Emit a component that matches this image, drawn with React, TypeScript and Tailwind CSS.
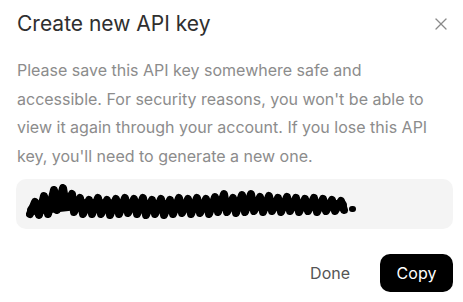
import { X } from "lucide-react";

const scribble =
  "M4 30 L9 18 L13 31 L18 12 L22 30 L28 6 L31 26 L37 4 L40 22 L46 10 L48 28 L54 14 L57 30 L63 16 L66 30 L72 14 L75 30 L81 16 L84 31 L90 15 L93 30 L99 14 L102 29 L108 15 L111 30 L117 14 L120 31 L126 16 L129 30 L135 15 L138 31 L144 16 L147 30 L153 14 L156 29 L162 15 L165 30 L171 14 L174 29 L180 15 L183 30 L189 13 L192 28 L198 10 L201 28 L207 14 L210 29 L216 11 L219 28 L225 10 L228 27 L234 13 L237 28 L243 12 L246 27 L252 14 L255 28 L261 13 L264 27 L270 14 L273 28 L279 15 L282 27 L288 14 L291 28 L297 15 L300 27 L306 16 L309 27 L315 17 L318 26";

export default function App() {
  return (
    <div className="w-[463px] h-[302px] bg-white pl-4 pr-[10px] pt-[10px] font-['Inter',sans-serif]">
      {/* header */}
      <div className="flex items-center justify-between">
        <h2 className="pl-px text-[21px] leading-[28px] text-[#2f2f2f]">Create new API key</h2>
        <X className="mr-[2px] h-[20px] w-[20px] text-[#8a8a8a]" strokeWidth={1.5} />
      </div>

      {/* description */}
      <p className="mt-[18px] w-[420px] pl-px text-[16px] leading-[28.5px] text-[#8c8c8c]">
        Please save this API key somewhere safe and accessible. For security reasons, you won't be able to
        view it again through your account. If you lose this API key, you'll need to generate a new one.
      </p>

      {/* key box */}
      <div className="mt-[9px] flex h-[50px] items-center rounded-[10px] bg-[#f4f4f4] pl-[10px]">
        <svg width="340" height="40" viewBox="0 0 340 40" fill="none">
          <path d={scribble} stroke="#000" strokeWidth="8" strokeLinecap="round" strokeLinejoin="round" />
          <path d="M6 26 L60 20 L200 22 L316 21" stroke="#000" strokeWidth="10" strokeLinecap="round" />
          <path d="M326 25 L327 25" stroke="#000" strokeWidth="6" strokeLinecap="round" />
        </svg>
      </div>

      {/* actions */}
      <div className="mt-[25px] flex items-center justify-end gap-[30px]">
        <button className="text-[16px] text-[#555]">Done</button>
        <button className="h-[38px] w-[73px] rounded-[10px] bg-black text-[16px] text-white">Copy</button>
      </div>
    </div>
  );
}
